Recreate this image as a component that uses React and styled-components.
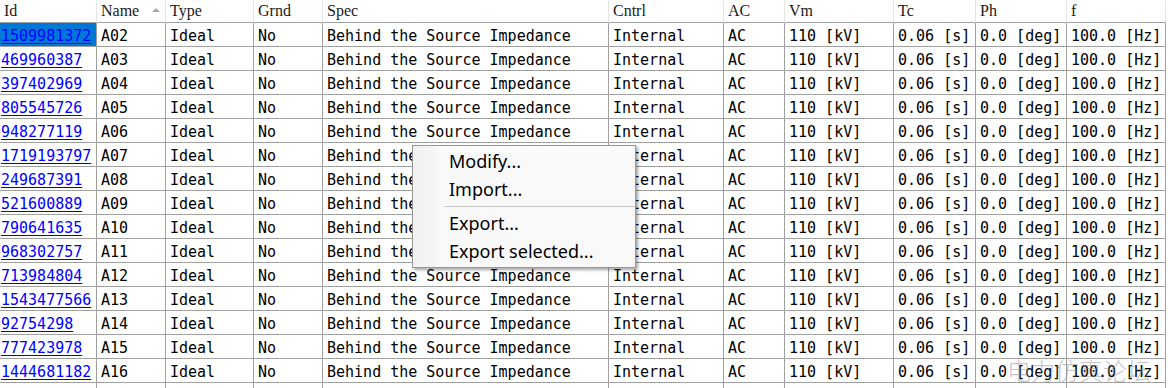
import { createGlobalStyle, styled } from "styled-components"

const GlobalStyle = createGlobalStyle`
  html, body {
    margin: 0;
    padding: 0;
    background: #ffffff;
    overflow: hidden;
  }
`

const columns = [
  { key: "id", title: "Id", width: 97 },
  { key: "name", title: "Name", width: 69, sorted: true },
  { key: "type", title: "Type", width: 88 },
  { key: "grnd", title: "Grnd", width: 69 },
  { key: "spec", title: "Spec", width: 286 },
  { key: "cntrl", title: "Cntrl", width: 115 },
  { key: "ac", title: "AC", width: 61 },
  { key: "vm", title: "Vm", width: 109 },
  { key: "tc", title: "Tc", width: 82 },
  { key: "ph", title: "Ph", width: 91 },
  { key: "f", title: "f", width: 99 },
]

const ids = [
  ["1509981372", "A02"],
  ["469960387", "A03"],
  ["397402969", "A04"],
  ["805545726", "A05"],
  ["948277119", "A06"],
  ["1719193797", "A07"],
  ["249687391", "A08"],
  ["521600889", "A09"],
  ["790641635", "A10"],
  ["968302757", "A11"],
  ["713984804", "A12"],
  ["1543477566", "A13"],
  ["92754298", "A14"],
  ["777423978", "A15"],
  ["1444681182", "A16"],
]

const rows = ids.map(([id, name]) => ({
  id,
  name,
  type: "Ideal",
  grnd: "No",
  spec: "Behind the Source Impedance",
  cntrl: "Internal",
  ac: "AC",
  vm: "110 [kV]",
  tc: "0.06 [s]",
  ph: "0.0 [deg]",
  f: "100.0 [Hz]",
}))

const template = columns.map(c => `${c.width}px`).join(" ")

export default function App() {
  return (
    <Page>
      <GlobalStyle />
      <Grid $cols={template}>
        {columns.map(c => (
          <HeadCell key={c.key}>
            {c.title}
            {c.sorted && <SortArrow />}
          </HeadCell>
        ))}
        {rows.map((r, i) =>
          columns.map(c => (
            <Cell key={`${i}-${c.key}`} $first={c.key === "id"} $selected={i === 0 && c.key === "id"}>
              {c.key === "id" ? <IdLink>{r.id}</IdLink> : r[c.key]}
            </Cell>
          ))
        )}
        {columns.map(c => (
          <Cell key={`empty-${c.key}`} />
        ))}
      </Grid>

      <Menu>
        <Gutter />
        <MenuItem>Modify...</MenuItem>
        <MenuItem>Import...</MenuItem>
        <Separator />
        <MenuItem>Export...</MenuItem>
        <MenuItem>Export selected...</MenuItem>
      </Menu>

      <Watermark>电力仿真论坛</Watermark>
    </Page>
  )
}

const Page = styled.div`
  position: relative;
  width: 1168px;
  height: 388px;
  overflow: hidden;
  background: #ffffff;
`

const Grid = styled.div`
  display: grid;
  grid-template-columns: ${p => p.$cols};
  grid-auto-rows: 24px;
  grid-template-rows: 23px;
`

const HeadCell = styled.div`
  position: relative;
  box-sizing: border-box;
  height: 23px;
  padding: 0 0 0 4px;
  border-right: 1px solid #e5e5e5;
  border-bottom: 1px solid #a0a0a0;
  font-family: "Liberation Serif", "Times New Roman", serif;
  font-size: 16px;
  line-height: 21px;
  color: #1a1a1a;
  white-space: nowrap;
`

const SortArrow = styled.span`
  position: absolute;
  right: 5px;
  top: 8px;
  width: 0;
  height: 0;
  border-left: 4px solid transparent;
  border-right: 4px solid transparent;
  border-bottom: 4px solid #a8a8a8;
`

const Cell = styled.div`
  box-sizing: border-box;
  height: 24px;
  padding-left: ${p => (p.$first ? "1px" : "4px")};
  border-right: 1px solid #a0a0a0;
  border-bottom: 1px solid #a0a0a0;
  background: ${p => (p.$selected ? "#0078d7" : "transparent")};
  font-family: "DejaVu Sans Mono", "Liberation Mono", monospace;
  font-size: 15px;
  line-height: 27px;
  color: #000000;
  white-space: nowrap;
  overflow: hidden;
`

const IdLink = styled.span`
  color: #0000ff;
  text-decoration: underline;
  text-underline-offset: 2px;
`

const Menu = styled.div`
  position: absolute;
  left: 412px;
  top: 145px;
  width: 224px;
  box-sizing: border-box;
  padding: 1px 0 2px;
  background: #f9f9f9;
  border: 1px solid #979797;
  box-shadow: 2px 2px 3px rgba(0, 0, 0, 0.35);
  font-family: "Noto Sans", "Open Sans", sans-serif;
  font-size: 18px;
  color: #000000;
`

const Gutter = styled.div`
  position: absolute;
  left: 0;
  top: 0;
  bottom: 0;
  width: 24px;
  background: linear-gradient(to right, #f1f1f1, #f6f6f6);
`

const MenuItem = styled.div`
  position: relative;
  height: 28px;
  line-height: 28px;
  padding-left: 36px;
  white-space: nowrap;
`

const Separator = styled.div`
  position: relative;
  height: 6px;
  margin-left: 31px;
  &::after {
    content: "";
    position: absolute;
    left: 0;
    right: 0;
    top: 3px;
    border-top: 1px solid #c8c8c8;
  }
`

const Watermark = styled.div`
  position: absolute;
  left: 1007px;
  top: 354px;
  font-family: "Noto Sans CJK SC", sans-serif;
  font-weight: 300;
  font-size: 24px;
  line-height: 32px;
  color: rgba(140, 140, 140, 0.5);
  white-space: nowrap;
`
